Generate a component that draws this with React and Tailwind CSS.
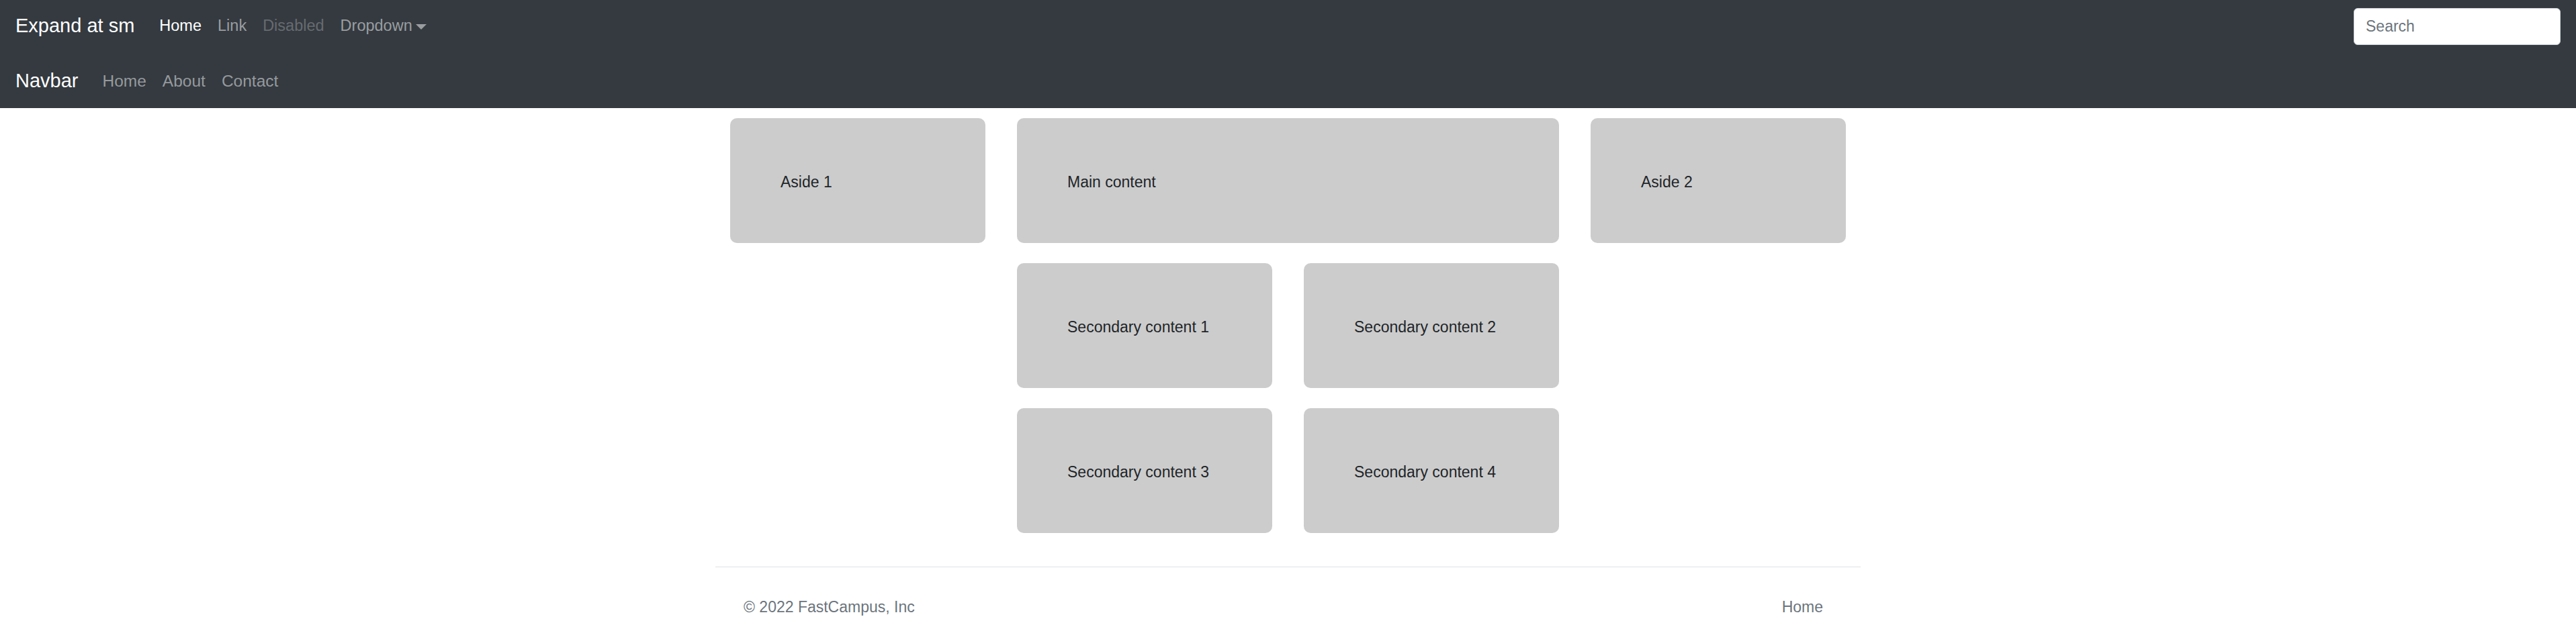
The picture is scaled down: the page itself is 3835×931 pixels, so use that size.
const topLinks = [
  { label: "Home", cls: "text-white" },
  { label: "Link", cls: "text-[#9a9da0]" },
  { label: "Disabled", cls: "text-[#676b70]" },
];

const cards = [
  { label: "Aside 1", cls: "col-start-1" },
  { label: "Main content", cls: "col-span-2" },
  { label: "Aside 2", cls: "col-start-4" },
  { label: "Secondary content 1", cls: "col-start-2" },
  { label: "Secondary content 2", cls: "col-start-3" },
  { label: "Secondary content 3", cls: "col-start-2" },
  { label: "Secondary content 4", cls: "col-start-3" },
];

export default function App() {
  return (
    <div className="min-h-screen bg-white font-['Liberation_Sans',Arial,sans-serif] text-[23px] leading-[1.5] text-[#212529]">
      {/* Navbar expand at sm */}
      <nav className="h-[81px] pb-[3px] bg-[#343a40] px-[23px] flex items-center justify-between">
        <div className="flex items-center">
          <a className="text-[29px] text-white mr-[25px] leading-[1.5]">Expand at sm</a>
          <ul className="flex items-center text-[23.5px]">
            {topLinks.map((l) => (
              <li key={l.label}>
                <a className={`block px-[12px] py-[11px] ${l.cls}`}>{l.label}</a>
              </li>
            ))}
            <li>
              <a className="flex items-center px-[12px] py-[11px] text-[#9a9da0]">
                Dropdown
                <span className="ml-[5px] mt-[1px] w-0 h-0 border-l-[8px] border-r-[8px] border-t-[8px] border-l-transparent border-r-transparent border-t-[#9a9da0]" />
              </a>
            </li>
          </ul>
        </div>
        <input
          placeholder="Search"
          className="w-[308px] h-[55px] bg-white rounded-[6px] border border-[#ced4da] px-[17px] text-[23px] text-[#495057] placeholder:text-[#6c757d] outline-none"
        />
      </nav>

      {/* Navbar */}
      <nav className="h-[80px] bg-[#343a40] px-[23px] flex items-center">
        <a className="text-[29px] text-white mr-[24px]">Navbar</a>
        <ul className="flex items-center text-[24.5px]">
          {["Home", "About", "Contact"].map((l) => (
            <li key={l}>
              <a className="block px-[12px] py-[11px] text-[#96999d]">{l}</a>
            </li>
          ))}
        </ul>
      </nav>

      {/* Content */}
      <div className="w-[1705px] mx-auto">
        <div className="px-[22px] mt-[15px] grid grid-cols-4 gap-x-[47px] gap-y-[30px]">
          {cards.map((c) => (
            <div
              key={c.label}
              className={`h-[186px] bg-[#cccccc] rounded-[10px] flex items-center pl-[75px] pt-[5px] ${c.cls}`}
            >
              {c.label}
            </div>
          ))}
        </div>

        {/* Footer */}
        <footer className="mt-[50px] border-t border-[#dee2e6] flex justify-between items-center pt-[42px] pb-[23px] text-[#6c757d]">
          <p className="pl-[42px]">© 2022 FastCampus, Inc</p>
          <a className="pr-[56px]">Home</a>
        </footer>
      </div>
    </div>
  );
}
